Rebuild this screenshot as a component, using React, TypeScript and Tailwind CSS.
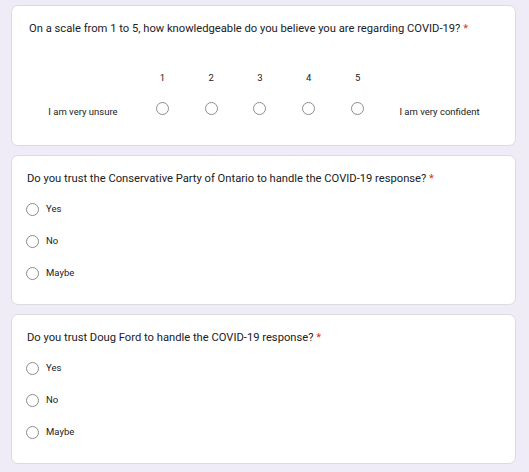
import React from "react";

const Radio = () => (
  <span className="block w-[13px] h-[13px] rounded-full border-[1.5px] border-[#8a8d91] bg-white" />
);

const Title = ({ text }: { text: string }) => (
  <div className="text-[11.2px] leading-[16px] text-[#202124]">
    {text} <span className="text-[#d93025]">*</span>
  </div>
);

const Choice = ({ question, options }: { question: string; options: string[] }) => (
  <div className="bg-white border border-[#dadce0] rounded-[7px] pl-[14px] pt-[15px] pb-[24px]">
    <div className="pl-[1px]">
      <Title text={question} />
    </div>
    <div className="flex flex-col gap-[19px] mt-[16px]">
      {options.map((o) => (
        <div key={o} className="flex items-center h-[13px]">
          <Radio />
          <span className="ml-[7px] text-[9.5px] text-[#202124]">{o}</span>
        </div>
      ))}
    </div>
  </div>
);

export default function App() {
  const scale = [1, 2, 3, 4, 5];
  return (
    <div
      className="min-h-[472px] bg-[#efebf7] pl-[11px] pr-[13px] pt-[5px] pb-2 flex flex-col gap-[9px]"
      style={{ fontFamily: "Roboto, 'Liberation Sans', sans-serif" }}
    >
      <div className="bg-white border border-[#dadce0] rounded-[7px] pl-[17px] pt-[15px] h-[141px]">
        <Title text="On a scale from 1 to 5, how knowledgeable do you believe you are regarding COVID-19?" />
        <div className="flex mt-[34px] ml-[-1px]">
          <div className="w-[110px] shrink-0" />
          <div className="flex">
            {scale.map((n) => (
              <div key={n} className="w-[48.8px] flex flex-col items-center">
                <span className="text-[9.5px] leading-[14px] text-[#202124]">{n}</span>
              </div>
            ))}
          </div>
        </div>
        <div className="flex items-center mt-[13px] ml-[-1px]">
          <div className="w-[110px] shrink-0 text-center text-[9.5px] text-[#202124] pt-[7px]">
            I am very unsure
          </div>
          <div className="flex">
            {scale.map((n) => (
              <div key={n} className="w-[48.8px] flex justify-center">
                <Radio />
              </div>
            ))}
          </div>
          <div className="w-[115px] shrink-0 text-center text-[9.5px] text-[#202124] pt-[7px]">
            I am very confident
          </div>
        </div>
      </div>
      <Choice
        question="Do you trust the Conservative Party of Ontario to handle the COVID-19 response?"
        options={["Yes", "No", "Maybe"]}
      />
      <Choice
        question="Do you trust Doug Ford to handle the COVID-19 response?"
        options={["Yes", "No", "Maybe"]}
      />
    </div>
  );
}
